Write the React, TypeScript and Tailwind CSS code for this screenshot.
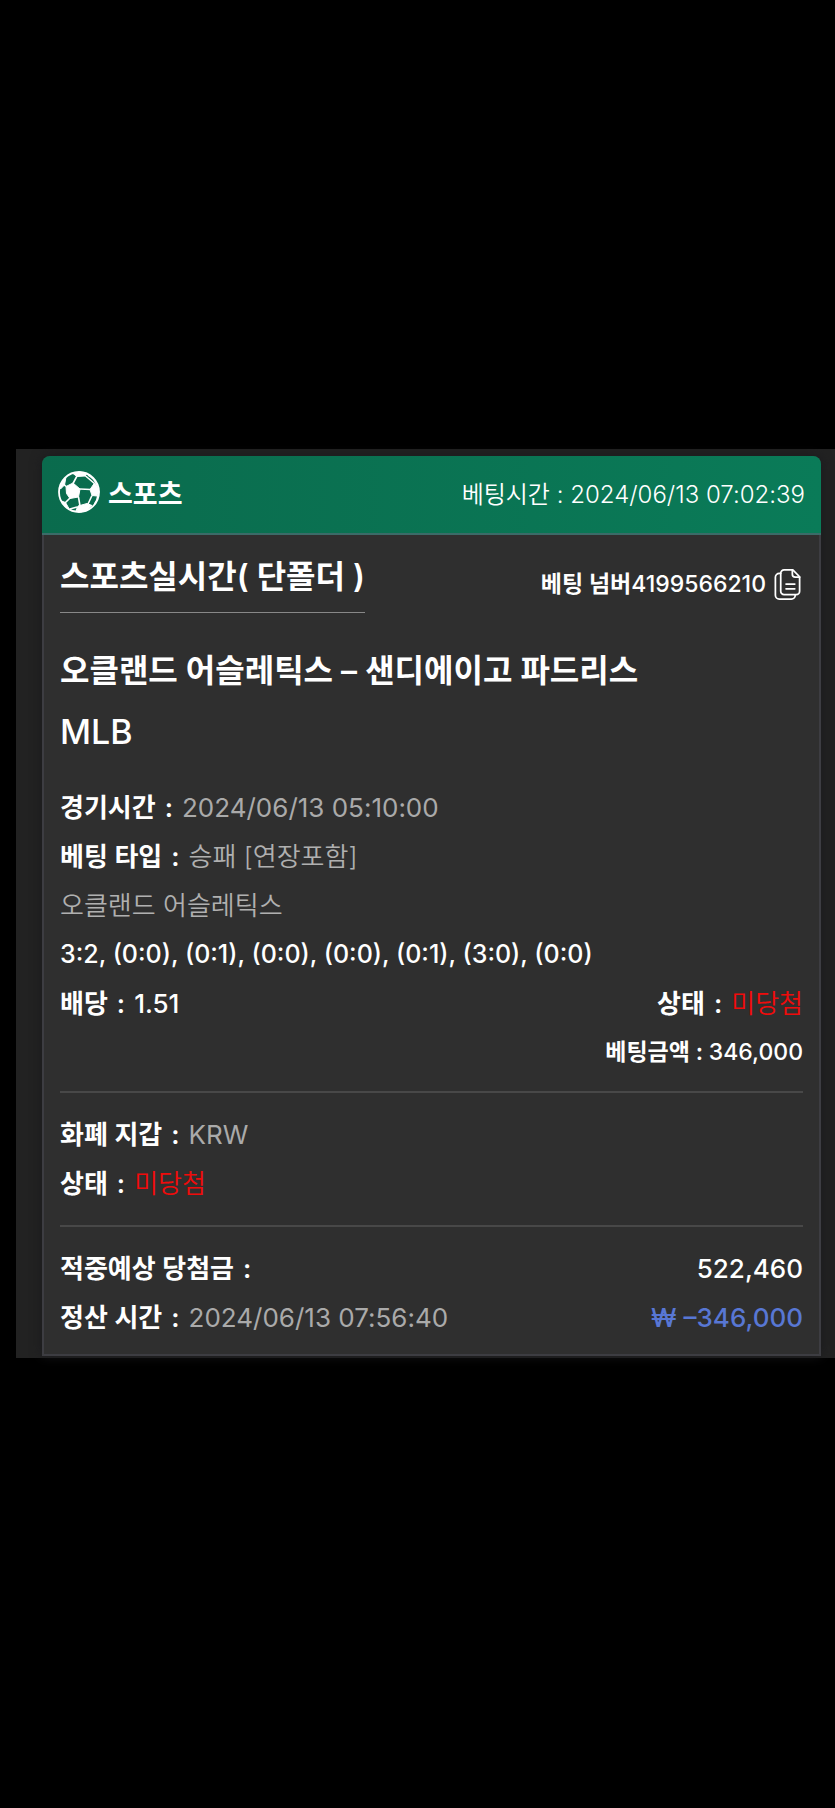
import React from 'react';

function Soccer() {
  return (
    <svg viewBox="0 0 42 42" className="size-[42px] shrink-0" aria-hidden="true">
      <circle cx="21" cy="21" r="20" fill="none" stroke="#fff" strokeWidth="1.8" />
      <g fill="#fff" stroke="#fff" strokeWidth="1" strokeLinejoin="round">
        <path d="M8 15.5l7-3.5 7 6-1.5 8-8.5 1.5-3.5-5z" />
        <path d="M15 2.5l7-1.5 7 1.5-2 2.5-8 .5z" />
        <path d="M32 18.5l4.500-6.500 3 3 1.500 6-2 4-5-.5z" />
        <path d="M20 35l9-2.500 5 2-5 4.500-6 2-5-1.500z" />
        <path d="M2 16l3-7 3-3-1.500 8-4 4z" />
        <path d="M3.500 30l4 1.500 4 7-4-2.500z" />
      </g>
      <g fill="none" stroke="#fff" strokeWidth="1.6">
        <path d="M15 12.500l4-7.500M8 15.500l-2-2M22 18l10.500.5M20.500 26l1.500 9M34 24.500l-4 8.500M12 27l-5 5M27 4.500l9.500 8" />
        <path d="M30 4q6 3 9 10M36.500 33q3-4 3.500-9M12 38l7-2" />
      </g>
    </svg>
  );
}

function Copy() {
  return (
    <svg viewBox="0 0 27 32" className="h-[31px] w-[27px]" fill="none" stroke="#fff" strokeWidth="1.8" strokeLinejoin="round" strokeLinecap="round" aria-hidden="true">
      <path d="M10 1h9l7 7v15a3.500 3.500 0 0 1-3.500 3.500H10A3.500 3.500 0 0 1 6.500 23V4.500A3.500 3.500 0 0 1 10 1z" />
      <path d="M18.500 1v4.500a3 3 0 0 0 3 3H26M12 15.500h9M12 20.500h9M6.500 4.500H5A4 4 0 0 0 1 8.500V27a4 4 0 0 0 4 4h12.500a4 4 0 0 0 4-4" />
    </svg>
  );
}

function Label({ text }: { text: string }) {
  return (
    <span className="font-semibold">
      {text}
      <span className="mx-[9px]">:</span>
    </span>
  );
}

export default function App() {
  return (
    <main className="min-h-screen bg-black py-[449px] pl-4 font-['Inter','Noto_Sans_CJK_KR',sans-serif] text-white">
      <div className="bg-[#222] pt-[7px] pr-[14px] pb-[2px] pl-[26px]">
        <article className="rounded-t-lg bg-[#2f2f2f] shadow-[0_0_12px_#1a1a1d]">
          <header className="flex h-[79px] items-center justify-between rounded-t-lg border-b-2 border-[#3b6b68] bg-linear-to-r from-[#0a6b4d] to-[#0a7b58] px-4">
            <h1 className="flex items-start gap-2 text-[27px] leading-[48px] font-semibold"><Soccer />스포츠</h1>
            <p className="text-2xl font-[350]">베팅시간 : 2024/06/13 07:02:39</p>
          </header>
          <div className="border-x-2 border-b-2 border-[#3d3d42] px-4 pb-3 text-[26px] leading-[49px]">
            <div className="flex items-start justify-between">
              <h2 className="border-b border-[#888] pt-[17px] pb-[11px] text-[32px] font-semibold">스포츠실시간( 단폴더 )</h2>
              <p className="flex items-center gap-2 pt-[25px] pr-[2px] text-[23px] font-medium">
                <span><span className="font-semibold">베팅 넘버</span>4199566210</span>
                <button type="button" aria-label="복사"><Copy /></button>
              </p>
            </div>
            <div className="pt-[27px] pb-[21px] leading-[61px]">
              <h3 className="text-[32px] font-semibold">오클랜드 어슬레틱스 – 샌디에이고 파드리스</h3>
              <p className="text-[34px] font-medium">MLB</p>
            </div>
            <section className="border-b-2 border-[#484848] pb-[14px]">
              <p><Label text="경기시간" /><span className="text-[#aaa]">2024/06/13 05:10:00</span></p>
              <p><Label text="베팅 타입" /><span className="font-[350] text-[#b0b0b0]">승패 [연장포함]</span></p>
              <p className="font-[350] text-[#b0b0b0]">오클랜드 어슬레틱스</p>
              <p className="text-[25px] font-medium">3:2, (0:0), (0:1), (0:0), (0:0), (0:1), (3:0), (0:0)</p>
              <div className="flex justify-between">
                <p className="font-medium"><Label text="배당" />1.51</p>
                <p><Label text="상태" /><span className="font-[350] text-[#f00b0b]">미당첨</span></p>
              </div>
              <p className="text-right text-[23px] font-medium"><span className="font-semibold">베팅금액 : </span>346,000</p>
            </section>
            <section className="border-b-2 border-[#484848] py-[17px]">
              <p><Label text="화폐 지갑" /><span className="text-[#aaa]">KRW</span></p>
              <p><Label text="상태" /><span className="font-[350] text-[#f00b0b]">미당첨</span></p>
            </section>
            <section className="pt-[17px]">
              <div className="flex justify-between">
                <p><Label text="적중예상 당첨금" /></p>
                <p className="font-medium">522,460</p>
              </div>
              <div className="flex justify-between">
                <p><Label text="정산 시간" /><span className="text-[#aaa]">2024/06/13 07:56:40</span></p>
                <p className="font-medium text-[#5877d4]">₩ –346,000</p>
              </div>
            </section>
          </div>
        </article>
      </div>
    </main>
  );
}
